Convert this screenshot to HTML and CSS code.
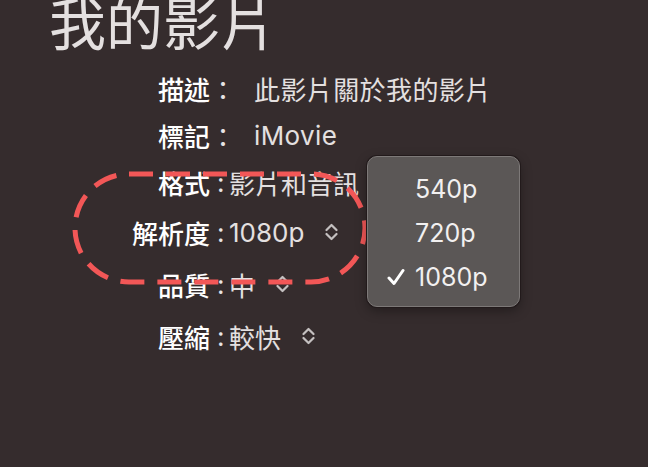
FILE: index.html
```html
<!DOCTYPE html>
<html lang="zh-Hant">
<head>
    <meta charset="UTF-8">
    <meta name="viewport" content="width=device-width, initial-scale=1.0">
    <title>我的影片</title>
    <link rel="stylesheet" href="styles.css">
</head>
<body>

    <div class="movie-title">我的影片</div>

    <div class="info-list">
        <div class="info-row">
            <span class="label">描述</span><span class="sep wide">：</span>
            <span class="value spaced">此影片關於我的影片</span>
        </div>
        <div class="info-row">
            <span class="label">標記</span><span class="sep wide">：</span>
            <span class="value spaced">iMovie</span>
        </div>
        <div class="info-row">
            <span class="label">格式</span><span class="sep">:</span>
            <span class="value">影片和音訊</span>
        </div>
        <div class="info-row popup-row">
            <span class="label">解析度</span><span class="sep">:</span>
            <span class="value">1080p</span>
            <svg class="chevrons" width="13" height="20" viewBox="0 0 13 20">
                <path d="M1.5 8 L6.5 3 L11.5 8 M1.5 12 L6.5 17 L11.5 12"/>
            </svg>
        </div>
        <div class="info-row popup-row">
            <span class="label">品質</span><span class="sep">:</span>
            <span class="value">中</span>
            <svg class="chevrons" width="13" height="20" viewBox="0 0 13 20">
                <path d="M1.5 8 L6.5 3 L11.5 8 M1.5 12 L6.5 17 L11.5 12"/>
            </svg>
        </div>
        <div class="info-row popup-row">
            <span class="label">壓縮</span><span class="sep">:</span>
            <span class="value">較快</span>
            <svg class="chevrons" width="13" height="20" viewBox="0 0 13 20">
                <path d="M1.5 8 L6.5 3 L11.5 8 M1.5 12 L6.5 17 L11.5 12"/>
            </svg>
        </div>
    </div>

    <!-- annotation around the resolution row -->
    <svg class="highlight" width="300" height="118" viewBox="0 0 300 118">
        <rect x="5" y="5" width="290" height="108" rx="54" ry="54"/>
    </svg>

    <div class="popup-menu">
        <div class="menu-item">540p</div>
        <div class="menu-item">720p</div>
        <div class="menu-item checked">
            <svg class="check" width="18" height="18" viewBox="0 0 18 18">
                <path d="M2 10 L7 15.5 L16 2.5"/>
            </svg>
            1080p
        </div>
    </div>

</body>
</html>
```

FILE: styles.css
```css
body {
    font-family: Inter, "Noto Sans CJK TC", sans-serif;
    background-color: #352c2d;
    margin: 0;
    width: 648px;
    height: 467px;
    overflow: hidden;
    position: relative;
}

.movie-title {
    font-family: "Noto Sans CJK TC", sans-serif;
    font-size: 57px;
    line-height: 57px;
    margin-top: -8px;
    margin-left: 49px;
    color: #e4e0e0;
}

.info-list {
    margin-top: 16px;
    display: flex;
    flex-direction: column;
    font-size: 26px;
}

.info-row {
    display: flex;
    align-items: center;
    height: 47px;
}

.info-row.popup-row {
    height: 52px;
}

.label {
    width: 210px;
    text-align: right;
    color: #ffffff;
    font-family: "Noto Sans CJK TC", sans-serif;
    font-weight: 500;
}

.sep {
    color: #e8e4e4;
    margin-left: 7px;
    width: 10px;
}

.sep.wide {
    margin-left: 0;
    width: 26px;
    font-family: "Noto Sans CJK TC", sans-serif;
}

.value {
    color: #e4e0e0;
    margin-left: 2px;
}

.value.spaced {
    margin-left: 18px;
    letter-spacing: 0.4px;
}

.chevrons {
    margin-left: 21px;
}

.chevrons path {
    fill: none;
    stroke: #c4c0c0;
    stroke-width: 2.2;
    stroke-linecap: round;
    stroke-linejoin: round;
}

.highlight {
    position: absolute;
    left: 70px;
    top: 169px;
}

.highlight rect {
    fill: none;
    stroke: #f25757;
    stroke-width: 5;
    stroke-dasharray: 24 13;
}

.popup-menu {
    position: absolute;
    left: 367px;
    top: 156px;
    width: 153px;
    height: 151px;
    box-sizing: border-box;
    padding-top: 10px;
    background-color: #5b5756;
    border: 1px solid #7d7978;
    border-radius: 10px;
    box-shadow: 0 0 0 1px #221a1b, 0 4px 12px rgba(0,0,0,0.35);
    font-size: 25px;
    color: #f2f0f0;
}

.menu-item {
    position: relative;
    height: 44px;
    line-height: 44px;
    padding-left: 47px;
}

.check {
    position: absolute;
    left: 19px;
    top: 13px;
}

.check path {
    fill: none;
    stroke: #ffffff;
    stroke-width: 3;
    stroke-linecap: round;
    stroke-linejoin: round;
}
```
